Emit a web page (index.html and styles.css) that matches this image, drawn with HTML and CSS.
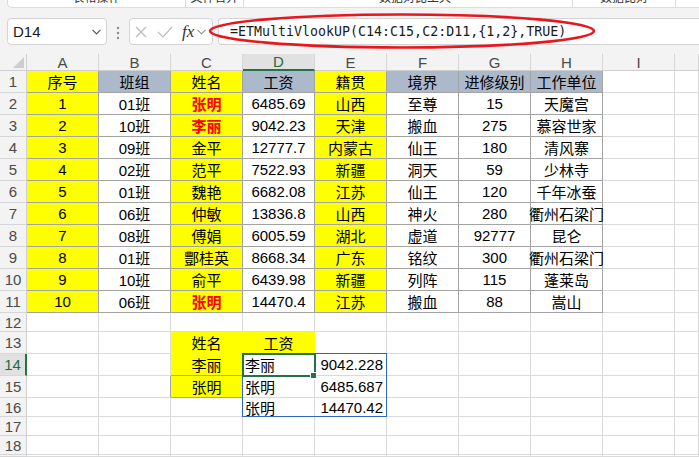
FILE: index.html
```html
<!DOCTYPE html>
<html lang="zh-CN">
<head>
<meta charset="utf-8">
<title>ETMultiVlookUP</title>
<link rel="stylesheet" href="styles.css">
</head>
<body>
<div class="ribbon">
  <div class="ribbon-panel">
    <div class="rseg s1"><span>表格操作</span></div>
    <div class="rseg s2"><span>文件合并</span></div>
    <div class="rseg s3"><span>数据对比工具</span></div>
    <div class="rseg s4"><span>数据比对</span></div>
    <div class="rseg s5"></div>
  </div>
</div>

<div class="fbar">
  <div class="namebox"><span>D14</span>
    <svg class="chev" width="9" height="6" viewBox="0 0 9 6"><polyline points="0.5,0.8 4.5,4.8 8.5,0.8" fill="none" stroke="#555" stroke-width="1.2"/></svg>
  </div>
  <div class="dots">
    <svg width="22" height="27" viewBox="0 0 22 27"><circle cx="11" cy="10" r="1.2" fill="#8a8a8a"/><circle cx="11" cy="15" r="1.2" fill="#8a8a8a"/><circle cx="11" cy="20" r="1.2" fill="#8a8a8a"/></svg>
  </div>
  <div class="fxbox">
    <svg class="ic-x" width="12" height="12" viewBox="0 0 12 12"><line x1="1" y1="1" x2="11" y2="11" stroke="#bcbcbc" stroke-width="1.2"/><line x1="11" y1="1" x2="1" y2="11" stroke="#bcbcbc" stroke-width="1.2"/></svg>
    <svg class="ic-ok" width="16" height="12" viewBox="0 0 16 12"><polyline points="1,6 6,11 15,1" fill="none" stroke="#bcbcbc" stroke-width="1.2"/></svg>
    <span class="fx">fx</span>
    <svg class="chev2" width="9" height="6" viewBox="0 0 9 6"><polyline points="0.5,0.8 4.5,4.8 8.5,0.8" fill="none" stroke="#8a8a8a" stroke-width="1.1"/></svg>
  </div>
  <div class="formula">=ETMultiVlookUP(C14:C15,C2:D11,{1,2},TRUE)</div>
</div>

<svg class="ring" width="699" height="60" viewBox="0 0 699 60"><ellipse cx="402" cy="31" rx="192" ry="16.5" fill="none" stroke="#e8161d" stroke-width="2.6"/></svg>

<div class="sheet">
  <div class="corner"><svg width="27" height="17" viewBox="0 0 27 17"><polygon points="24,3 24,14 13,14" fill="#cdcdcd"/></svg></div>
  <div class="ch">A</div><div class="ch">B</div><div class="ch">C</div><div class="ch sel">D</div><div class="ch">E</div><div class="ch">F</div><div class="ch">G</div><div class="ch">H</div><div class="ch">I</div><div class="ch"></div>

  <div class="rh">1</div><div class="t y">序号</div><div class="t g">班组</div><div class="t y">姓名</div><div class="t g">工资</div><div class="t y">籍贯</div><div class="t g">境界</div><div class="t g">进修级别</div><div class="t g">工作单位</div><div></div><div></div>

  <div class="rh">2</div><div class="t y">1</div><div class="t">01班</div><div class="t y red">张明</div><div class="t">6485.69</div><div class="t y">山西</div><div class="t">至尊</div><div class="t">15</div><div class="t">天魔宫</div><div></div><div></div>

  <div class="rh">3</div><div class="t y">2</div><div class="t">10班</div><div class="t y red">李丽</div><div class="t">9042.23</div><div class="t y">天津</div><div class="t">搬血</div><div class="t">275</div><div class="t">慕容世家</div><div></div><div></div>

  <div class="rh">4</div><div class="t y">3</div><div class="t">09班</div><div class="t y">金平</div><div class="t">12777.7</div><div class="t y">内蒙古</div><div class="t">仙王</div><div class="t">180</div><div class="t">清风寨</div><div></div><div></div>

  <div class="rh">5</div><div class="t y">4</div><div class="t">02班</div><div class="t y">范平</div><div class="t">7522.93</div><div class="t y">新疆</div><div class="t">洞天</div><div class="t">59</div><div class="t">少林寺</div><div></div><div></div>

  <div class="rh">6</div><div class="t y">5</div><div class="t">01班</div><div class="t y">魏艳</div><div class="t">6682.08</div><div class="t y">江苏</div><div class="t">仙王</div><div class="t">120</div><div class="t">千年冰蚕</div><div></div><div></div>

  <div class="rh">7</div><div class="t y">6</div><div class="t">06班</div><div class="t y">仲敏</div><div class="t">13836.8</div><div class="t y">山西</div><div class="t">神火</div><div class="t">280</div><div class="t">衢州石梁门</div><div></div><div></div>

  <div class="rh">8</div><div class="t y">7</div><div class="t">08班</div><div class="t y">傅娟</div><div class="t">6005.59</div><div class="t y">湖北</div><div class="t">虚道</div><div class="t">92777</div><div class="t">昆仑</div><div></div><div></div>

  <div class="rh">9</div><div class="t y">8</div><div class="t">01班</div><div class="t y">酆桂英</div><div class="t">8668.34</div><div class="t y">广东</div><div class="t">铭纹</div><div class="t">300</div><div class="t">衢州石梁门</div><div></div><div></div>

  <div class="rh">10</div><div class="t y">9</div><div class="t">10班</div><div class="t y">俞平</div><div class="t">6439.98</div><div class="t y">新疆</div><div class="t">列阵</div><div class="t">115</div><div class="t">蓬莱岛</div><div></div><div></div>

  <div class="rh">11</div><div class="t y">10</div><div class="t">06班</div><div class="t y red">张明</div><div class="t">14470.4</div><div class="t y">江苏</div><div class="t">搬血</div><div class="t">88</div><div class="t">嵩山</div><div></div><div></div>

  <div class="rh">12</div><div></div><div></div><div></div><div></div><div></div><div></div><div></div><div></div><div></div><div></div>

  <div class="rh">13</div><div></div><div></div><div class="y yn">姓名</div><div class="y yn">工资</div><div></div><div></div><div></div><div></div><div></div><div></div>

  <div class="rh sel">14</div><div></div><div></div><div class="y yn bd">李丽</div><div class="l sc">李丽<span class="spill"></span><span class="cursor"></span><span class="handle"></span></div><div class="r">9042.228</div><div></div><div></div><div></div><div></div><div></div>

  <div class="rh">15</div><div></div><div class="bdr"></div><div class="t y">张明</div><div class="l">张明</div><div class="r">6485.687</div><div></div><div></div><div></div><div></div><div></div>

  <div class="rh">16</div><div></div><div></div><div></div><div class="l">张明</div><div class="r">14470.42</div><div></div><div></div><div></div><div></div><div></div>

  <div class="rh">17</div><div></div><div></div><div></div><div></div><div></div><div></div><div></div><div></div><div></div><div></div>

  <div class="rh">18</div><div></div><div></div><div></div><div></div><div></div><div></div><div></div><div></div><div></div><div></div>

  <div class="rh"></div><div></div><div></div><div></div><div></div><div></div><div></div><div></div><div></div><div></div><div></div>
</div>
</body>
</html>
```

FILE: styles.css
```css
* { box-sizing: border-box; }
html, body { margin: 0; padding: 0; }
body {
  width: 699px;
  height: 457px;
  overflow: hidden;
  position: relative;
  background: #fff;
  font-family: "Liberation Sans", "Noto Sans CJK SC", sans-serif;
  color: #000;
}

/* ribbon remnant */
.ribbon { height: 9px; background: #f3f3f3; padding-left: 7px; overflow: hidden; }
.ribbon-panel {
  width: 692px; height: 8px; background: #fff;
  border: 1px solid #dcdcdc; border-top: none; border-right: none;
  border-radius: 0 0 0 5px;
  display: flex; overflow: hidden;
}
.rseg { flex: none; height: 100%; display: flex; justify-content: center; border-right: 1px solid #dcdcdc; overflow: hidden; }
.rseg span { font-size: 12px; line-height: 12px; margin-top: -8px; color: #333; white-space: nowrap; }
.s1 { width: 178px; }
.s2 { width: 58px; }
.s3 { width: 329px; padding-left: 14px; }
.s4 { width: 103px; }
.s5 { flex: 1; border-right: none; }

/* formula bar */
.fbar { height: 45px; background: #f3f3f3; display: flex; align-items: flex-start; padding: 9px 0 0 7px; }
.namebox {
  flex: none; width: 100px; height: 27px; background: #fff;
  border: 1px solid #d4d4d4; border-radius: 4px;
  display: flex; align-items: center; justify-content: space-between;
  padding: 0 5px 0 5px; font-size: 15px; color: #1a1a1a;
}
.dots { flex: none; width: 22px; height: 27px; }
.dots svg { display: block; }
.fxbox {
  flex: none; width: 84px; height: 27px; background: #fff;
  border: 1px solid #d4d4d4; border-radius: 4px;
  display: flex; align-items: center; padding-left: 5px;
}
.ic-x { flex: none; }
.ic-ok { flex: none; margin-left: 10px; }
.fx {
  margin-left: 9px; font-family: "Liberation Serif", serif; font-style: italic;
  font-size: 17px; color: #333; line-height: 1;
}
.chev2 { margin-left: 3px; }
.formula {
  flex: none; margin-left: 5px; width: 481px; height: 27px; background: #fff;
  border: 1px solid #d4d4d4; border-right: none; border-radius: 4px 0 0 4px;
  padding-left: 11px; font-family: "DejaVu Sans Mono", "Liberation Mono", monospace;
  font-size: 13.3px; line-height: 25px; color: #1a1a1a; white-space: nowrap;
}
.ring { position: absolute; left: 0; top: 0; pointer-events: none; z-index: 5; }

/* sheet grid */
.sheet {
  display: grid;
  grid-template-columns: 27px repeat(9, 72px) 24px;
  grid-template-rows: 17px repeat(11, 22px) 19px repeat(3, 22px) repeat(3, 19px) 2px;
  overflow: hidden;
}
.sheet > div {
  border-right: 1px solid #dadada;
  border-bottom: 1px solid #dadada;
  display: flex; align-items: center; justify-content: center;
  font-size: 15px; white-space: nowrap;
}
.sheet > .corner { display: block; background: #f3f3f3; border-right-color: #cfcfcf; border-bottom-color: #cfcfcf; }
.corner svg { display: block; }
.sheet > .ch { background: #f3f3f3; color: #4a4a4a; font-size: 15px; border-right-color: #d6d6d6; border-bottom-color: #cfcfcf; }
.sheet > .rh { background: #f3f3f3; color: #4a4a4a; font-size: 15px; border-right-color: #cfcfcf; border-bottom-color: #d6d6d6; overflow: hidden; }
.sheet > .ch.sel { background: #e1e1e1; color: #1e6b41; border-bottom: 2px solid #217346; }
.sheet > .rh.sel { background: #e1e1e1; color: #1e6b41; border-right: 2px solid #217346; }

.sheet > .t { border-right-color: #a3a3a3; border-bottom-color: #a3a3a3; }
.y { background: #ffff00; }
.g { background: #acb9ca; }
.red { color: #ff0000; font-weight: bold; }
.sheet > .yn { border-right-color: #ffff00; border-bottom-color: #ffff00; }
.sheet > .bd { border-bottom-color: #a3a3a3; }
.sheet > .bdr { border-right-color: #a3a3a3; }
.sheet > .l { justify-content: flex-start; padding-left: 2px; }
.sheet > .r { justify-content: flex-end; padding-right: 3px; }

/* selection overlays */
.sc { position: relative; }
.spill { position: absolute; left: -1px; top: -1px; width: 145px; height: 64px; border: 1px solid #2f65c6; z-index: 1; pointer-events: none; }
.cursor { position: absolute; left: -1px; top: -1px; width: 74px; height: 24px; border: 2px solid #217346; z-index: 2; pointer-events: none; }
.handle { position: absolute; left: 67px; top: 18px; width: 7px; height: 7px; background: #217346; border: 1px solid #fff; z-index: 3; }
```
